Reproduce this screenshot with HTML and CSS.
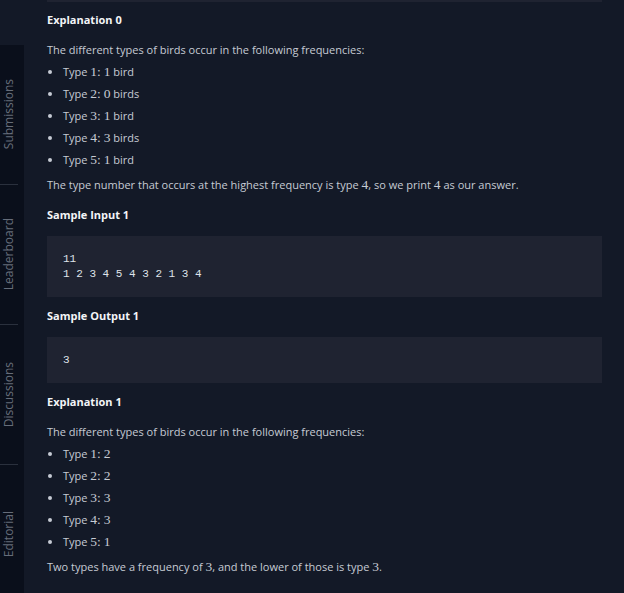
FILE: index.html
```html
<!DOCTYPE html>
<html lang="en">
<head>
<meta charset="utf-8">
<title>Migratory Birds</title>
<link rel="stylesheet" href="styles.css">
</head>
<body>
<div class="page">
  <nav class="sidebar">
    <div class="tab"><span class="tab-label">Submissions</span></div>
    <div class="tab"><span class="tab-label">Leaderboard</span></div>
    <div class="tab"><span class="tab-label">Discussions</span></div>
    <div class="tab"><span class="tab-label">Editorial</span></div>
  </nav>
  <main class="content">
    <div class="code-tail"></div>
    <h3 class="heading first">Explanation 0</h3>
    <p class="text">The different types of birds occur in the following frequencies:</p>
    <ul class="list">
      <li>Type <span class="m">1</span><span class="m">:</span> <span class="m">1</span> bird</li>
      <li>Type <span class="m">2</span><span class="m">:</span> <span class="m">0</span> birds</li>
      <li>Type <span class="m">3</span><span class="m">:</span> <span class="m">1</span> bird</li>
      <li>Type <span class="m">4</span><span class="m">:</span> <span class="m">3</span> birds</li>
      <li>Type <span class="m">5</span><span class="m">:</span> <span class="m">1</span> bird</li>
    </ul>
    <p class="text after-list">The type number that occurs at the highest frequency is type <span class="m">4</span>, so we print <span class="m">4</span> as our answer.</p>
    <h3 class="heading">Sample Input 1</h3>
    <pre class="code">11
1 2 3 4 5 4 3 2 1 3 4</pre>
    <h3 class="heading">Sample Output 1</h3>
    <pre class="code">3</pre>
    <h3 class="heading">Explanation 1</h3>
    <p class="text">The different types of birds occur in the following frequencies:</p>
    <ul class="list">
      <li>Type <span class="m">1</span><span class="m">:</span> <span class="m">2</span></li>
      <li>Type <span class="m">2</span><span class="m">:</span> <span class="m">2</span></li>
      <li>Type <span class="m">3</span><span class="m">:</span> <span class="m">3</span></li>
      <li>Type <span class="m">4</span><span class="m">:</span> <span class="m">3</span></li>
      <li>Type <span class="m">5</span><span class="m">:</span> <span class="m">1</span></li>
    </ul>
    <p class="text after-list">Two types have a frequency of <span class="m">3</span>, and the lower of those is type <span class="m">3</span>.</p>
  </main>
</div>
</body>
</html>
```

FILE: styles.css
```css
html, body {
  margin: 0;
  padding: 0;
  background: #131927;
}
body {
  height: 593px;
  overflow: hidden;
  font-family: "Open Sans", "Noto Sans", sans-serif;
  color: #c6cbd4;
}
.page {
  display: flex;
  align-items: stretch;
  min-height: 593px;
}
.sidebar {
  width: 24px;
  flex: 0 0 24px;
  margin-top: 45px;
  background: #0a0f1b;
  display: flex;
  flex-direction: column;
}
.tab {
  width: 18px;
  height: 139px;
  flex: 0 0 139px;
  border-bottom: 1px solid #2a303d;
  display: flex;
  align-items: center;
  justify-content: center;
}
.tab-label {
  writing-mode: vertical-rl;
  transform: rotate(180deg);
  font-size: 12px;
  line-height: 14px;
  color: #666d7a;
  white-space: nowrap;
}
.content {
  flex: 1;
  padding: 0 22px 0 23px;
}
.code-tail {
  height: 2px;
  background: #1f2331;
}
.heading {
  margin: 8px 0 0;
  font-size: 11px;
  line-height: 22px;
  font-weight: 700;
  color: #f3f5f8;
}
.heading.first {
  margin-top: 7px;
}
.text {
  margin: 8px 0 0;
  font-size: 11px;
  line-height: 22px;
}
.text.after-list {
  margin-top: 3px;
}
.list {
  margin: 0;
  padding-left: 16px;
  font-size: 11px;
  line-height: 22px;
}
.m {
  font-family: "Liberation Serif", "DejaVu Serif", serif;
  font-size: 13.5px;
  line-height: 0;
}
.code {
  margin: 10px 0 0;
  padding: 16px 16px 15px;
  background: #1f2331;
  font-family: "Liberation Mono", "DejaVu Sans Mono", monospace;
  font-size: 11px;
  line-height: 15px;
  color: #dfe3ea;
}
```
